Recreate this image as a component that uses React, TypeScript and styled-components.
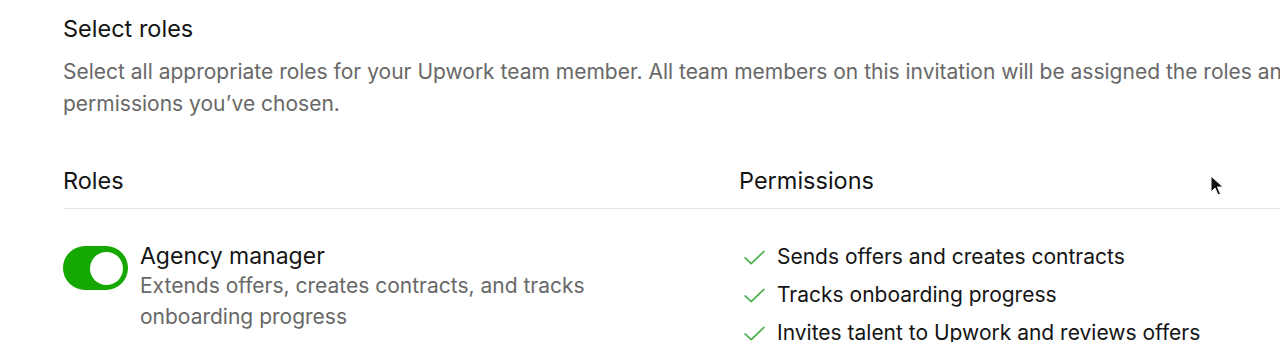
import styled, { createGlobalStyle } from 'styled-components';

const GlobalStyle = createGlobalStyle`
  html, body {
    margin: 0;
    padding: 0;
    background: #ffffff;
    overflow: hidden;
  }
  body {
    font-family: Inter, 'Liberation Sans', Arial, sans-serif;
    -webkit-font-smoothing: antialiased;
  }
`;

const permissions = [
  'Sends offers and creates contracts',
  'Tracks onboarding progress',
  'Invites talent to Upwork and reviews offers',
];

export default function App() {
  return (
    <>
      <GlobalStyle />
      <Page>
        <Title>Select roles</Title>
        <Intro>
          Select all appropriate roles for your Upwork team member. All team members on this invitation will be
          assigned the roles and permissions you’ve chosen.
        </Intro>
        <Table>
          <HeadRow>
            <HeadCell>Roles</HeadCell>
            <HeadCell>Permissions</HeadCell>
          </HeadRow>
          <BodyRow>
            <Role>
              <Toggle $on>
                <Knob />
              </Toggle>
              <RoleText>
                <RoleName>Agency manager</RoleName>
                <RoleDesc>Extends offers, creates contracts, and tracks onboarding progress</RoleDesc>
              </RoleText>
            </Role>
            <PermList>
              {permissions.map((p) => (
                <PermItem key={p}>
                  <Check />
                  {p}
                </PermItem>
              ))}
            </PermList>
          </BodyRow>
        </Table>
        <Cursor />
      </Page>
    </>
  );
}

function Check() {
  return (
    <CheckSvg viewBox="0 0 24 18" fill="none">
      <path d="M2 9.5 L8.5 15.5 L22 2.5" stroke="#4caf50" strokeWidth="1.8" strokeLinecap="round" strokeLinejoin="round" />
    </CheckSvg>
  );
}

function Cursor() {
  return (
    <CursorSvg viewBox="0 0 14 22">
      <path d="M1 1 L1 17 L5 13 L8 20 L10.5 19 L7.5 12 L13 12 Z" fill="#111" stroke="#fff" strokeWidth="1" />
    </CursorSvg>
  );
}

const Page = styled.div`
  position: relative;
  width: 1400px;
  height: 342px;
  padding: 14px 0 0 63px;
  box-sizing: border-box;
`;

const Title = styled.h2`
  margin: 0;
  font-size: 23.5px;
  line-height: 30px;
  font-weight: 400;
  color: #141414;
`;

const Intro = styled.p`
  margin: 12px 0 0;
  width: 1240px;
  font-size: 21px;
  line-height: 32px;
  color: #686868;
`;

const Table = styled.div`
  margin-top: 46px;
`;

const HeadRow = styled.div`
  display: grid;
  grid-template-columns: 676px 1fr;
  padding-bottom: 12px;
  border-bottom: 1px solid #e6e6e6;
`;

const HeadCell = styled.div`
  font-size: 23.5px;
  line-height: 30px;
  color: #141414;
`;

const BodyRow = styled.div`
  display: grid;
  grid-template-columns: 676px 1fr;
  padding-top: 33px;
`;

const Role = styled.div`
  display: flex;
  align-items: flex-start;
  gap: 12px;
`;

const Toggle = styled.div<{ $on?: boolean }>`
  flex: none;
  width: 65px;
  height: 44px;
  margin-top: 4px;
  border-radius: 22px;
  background: ${(p) => (p.$on ? '#14a800' : '#d5d5d5')};
  display: flex;
  align-items: center;
  justify-content: ${(p) => (p.$on ? 'flex-end' : 'flex-start')};
  padding: 0 5px;
  box-sizing: border-box;
`;

const Knob = styled.div`
  width: 33px;
  height: 33px;
  border-radius: 50%;
  background: #ffffff;
`;

const RoleText = styled.div`
  display: flex;
  flex-direction: column;
  width: 500px;
`;

const RoleName = styled.div`
  font-size: 23px;
  line-height: 28px;
  color: #141414;
`;

const RoleDesc = styled.div`
  font-size: 21px;
  line-height: 31px;
  color: #686868;
`;

const PermList = styled.ul`
  list-style: none;
  margin: 0;
  padding: 0;
  display: flex;
  flex-direction: column;
  gap: 8px;
`;

const PermItem = styled.li`
  display: flex;
  align-items: center;
  gap: 11px;
  font-size: 21px;
  line-height: 30px;
  color: #141414;
`;

const CheckSvg = styled.svg`
  width: 23px;
  height: 17px;
  margin-left: 4px;
  flex: none;
`;

const CursorSvg = styled.svg`
  position: absolute;
  left: 1210px;
  top: 175px;
  width: 14px;
  height: 22px;
`;
